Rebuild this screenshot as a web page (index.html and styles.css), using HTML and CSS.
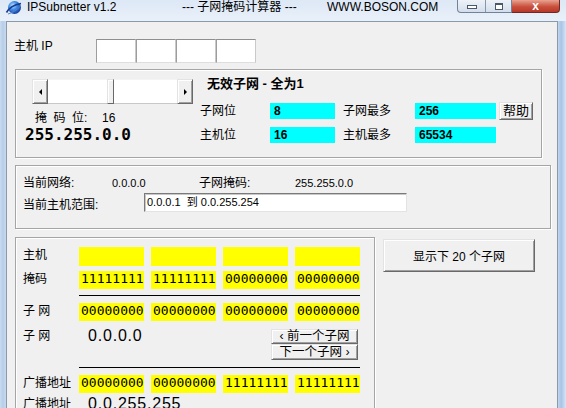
FILE: index.html
```html
<!DOCTYPE html>
<html>
<head>
<meta charset="utf-8">
<link rel="stylesheet" href="styles.css">
</head>
<body>
<div class="window">
  <div class="titlebar">
    <svg class="appicon" viewBox="0 0 17 17">
      <defs>
        <radialGradient id="gl" cx="38%" cy="35%" r="70%">
          <stop offset="0" stop-color="#bfe2ff"/>
          <stop offset="0.45" stop-color="#3f8ce8"/>
          <stop offset="1" stop-color="#10379a"/>
        </radialGradient>
      </defs>
      <circle cx="9.5" cy="7.5" r="6.5" fill="url(#gl)"/>
      <path d="M1.5 12.5 C4 8, 10 4.5, 16 3.5" stroke="#173c8c" stroke-width="1.6" fill="none"/>
      <path d="M3 14 C7 13, 12 10, 15.5 6" stroke="#5a86c8" stroke-width="1" fill="none"/>
    </svg>
    <span class="ttext t1">IPSubnetter v1.2</span>
    <span class="ttext t2">--- 子网掩码计算器 ---</span>
    <span class="ttext t3">WWW.BOSON.COM</span>
    <div class="caption">
      <div class="cgroup">
        <div class="cbtn cmin"><span class="ico-min"></span></div>
        <div class="cbtn cmax"><span class="ico-max"></span></div>
      </div>
      <div class="cbtn cclose">x</div>
    </div>
  </div>
  <div class="frame">
    <div class="frame-l"></div>
    <div class="client">
      <div class="iprow">
        <div class="iplabel">主机 IP</div>
        <div class="ipbox"></div>
        <div class="ipbox"></div>
        <div class="ipbox"></div>
        <div class="ipbox"></div>
      </div>

      <div class="group g1">
        <div class="g1-left">
          <div class="sb">
            <div class="sbtn"><span class="arr-l"></span></div>
            <div class="track t-a"></div>
            <div class="thumb"></div>
            <div class="track t-b"></div>
            <div class="sbtn"><span class="arr-r"></span></div>
          </div>
          <div class="mask"><span class="mlab"><span class="sp">掩码</span>位:</span><span>16</span></div>
          <div class="bigip">255.255.0.0</div>
        </div>
        <div class="g1-right">
          <div class="g1-title">无效子网 - 全为1</div>
          <div class="g1-row r1">
            <span class="lab">子网位</span>
            <span class="cy">8</span>
            <span class="lab2">子网最多</span>
            <span class="cy cy2">256</span>
            <span class="btn help">帮助</span>
          </div>
          <div class="g1-row r2">
            <span class="lab">主机位</span>
            <span class="cy">16</span>
            <span class="lab2">主机最多</span>
            <span class="cy cy2">65534</span>
          </div>
        </div>
      </div>

      <div class="group g2">
        <div class="g2-row ra">
          <span class="l1">当前网络:</span>
          <span class="v1">0.0.0.0</span>
          <span class="l2">子网掩码:</span>
          <span class="v2">255.255.0.0</span>
        </div>
        <div class="g2-row rb">
          <span class="l3">当前主机范围:</span>
          <span class="range">0.0.0.1&nbsp; 到 0.0.255.254</span>
        </div>
      </div>

      <div class="bottom">
        <div class="group g3">
          <div class="brow b-host">
            <span class="blab">主机</span>
            <span class="yc"></span><span class="yc"></span><span class="yc"></span><span class="yc"></span>
          </div>
          <div class="brow b-mask">
            <span class="blab">掩码</span>
            <span class="yc">11111111</span><span class="yc">11111111</span><span class="yc">00000000</span><span class="yc">00000000</span>
          </div>
          <div class="hline l-a"></div>
          <div class="brow b-sub">
            <span class="blab">子 网</span>
            <span class="yc">00000000</span><span class="yc">00000000</span><span class="yc">00000000</span><span class="yc">00000000</span>
          </div>
          <div class="subip">
            <span class="blab">子 网</span>
            <span class="ipval">0.0.0.0</span>
            <div class="navbtns">
              <span class="btn nav">&lsaquo; 前一个子网</span>
              <span class="btn nav nav2">下一个子网 &rsaquo;</span>
            </div>
          </div>
          <div class="hline"></div>
          <div class="brow b-bc">
            <span class="blab">广播地址</span>
            <span class="yc">00000000</span><span class="yc">00000000</span><span class="yc">11111111</span><span class="yc">11111111</span>
          </div>
          <div class="subip bcip">
            <span class="blab">广播地址</span>
            <span class="ipval">0.0.255.255</span>
          </div>
        </div>
        <span class="btn show20">显示下 20 个子网</span>
      </div>
    </div>
    <div class="frame-r"></div>
  </div>
</div>
</body>
</html>
```

FILE: styles.css
```css
* { box-sizing: border-box; margin: 0; padding: 0; }
html, body { width: 566px; height: 408px; overflow: hidden; }
body {
  font-family: "Liberation Sans", "Noto Sans CJK SC", sans-serif;
  font-size: 12px;
  color: #000;
  background: #c4d8ee;
}
.window { width: 566px; height: 408px; display: flex; flex-direction: column; }

/* title bar */
.titlebar {
  height: 21px; flex: none; display: flex; align-items: flex-start;
  background: linear-gradient(#dde8f6, #e9f0f9);
}
.appicon { width: 17px; height: 17px; margin-left: 5px; flex: none; }
.ttext { line-height: 15px; font-size: 12px; white-space: nowrap; color: #000; }
.t1 { margin-left: 5px; width: 155px; }
.t2 { width: 145px; }
.t3 { width: 120px; }
.caption { margin-left: auto; margin-right: 6px; display: flex; height: 13px; }
.cgroup {
  display: flex; border: 1px solid #72829a; border-top: none;
  border-radius: 0 0 0 4px; overflow: hidden;
  background: linear-gradient(#eef2f8, #d3deeb);
}
.cbtn { height: 12px; display: flex; align-items: center; justify-content: center; }
.cmin { width: 28px; border-right: 1px solid #8796ab; }
.cmax { width: 25px; }
.ico-min { width: 10px; height: 4px; border: 1px solid #4a586c; background: #fff; margin-top: 2px; }
.ico-max { width: 8px; height: 7px; border: 1px solid #4a586c; border-top-width: 2px; background: #fff; }
.cclose {
  width: 48px; height: 13px; border: 1px solid #6e2a22; border-top: none; border-left: none;
  border-radius: 0 0 4px 0;
  background: linear-gradient(#e9a292, #c9503c 55%, #b8372a);
  color: #fff; font-weight: bold; font-size: 12px; line-height: 10px;
}

/* frame */
.frame { flex: 1; display: flex; min-height: 0; }
.frame-l { width: 6px; flex: none; background: linear-gradient(90deg, #c9dbef, #b7cee9 50%, #c8d9ee); }
.frame-r { width: 8px; flex: none; background: linear-gradient(90deg, #c2d6ed, #a9c4e6 40%, #d6e4f4); }
.client {
  flex: 1; background: #f0f0f0; border: 1px solid #8a99ab; border-bottom: none;
  padding-left: 8px; overflow: hidden;
}

/* ip row */
.iprow { display: flex; margin-top: 17px; height: 24px; }
.iplabel { width: 82px; margin-left: -1px; line-height: 14px; }
.ipbox {
  width: 40px; height: 24px; background: #fff;
  border: 1px solid; border-color: #8e8f8f #c9c9c9 #dedede #9d9d9d;
}

/* group boxes */
.group {
  border: 1px solid #a5a5a5;
  box-shadow: inset 1px 1px 0 #fff, 1px 1px 0 #fff;
}
.g1 { margin-top: 6px; width: 527px; height: 89px; display: flex; }
.g1-left { width: 184px; flex: none; }
.sb { margin: 9px 0 0 16px; width: 161px; height: 25px; display: flex; background: #fff; }
.sbtn {
  width: 16px; height: 25px; background: #f0f0f0; display: flex; align-items: center; justify-content: center;
  border: 1px solid; border-color: #e3e3e3 #696969 #696969 #e3e3e3;
  box-shadow: inset 1px 1px 0 #fff, inset -1px -1px 0 #a0a0a0;
}
.arr-l { width: 0; height: 0; border-top: 3px solid transparent; border-bottom: 3px solid transparent; border-right: 3px solid #000; }
.arr-r { width: 0; height: 0; border-top: 3px solid transparent; border-bottom: 3px solid transparent; border-left: 3px solid #000; }
.track { background: #fff; border-top: 1px solid #f4f4f4; border-bottom: 1px solid #c8c8c8; }
.t-a { width: 59px; }
.t-b { flex: 1; }
.thumb {
  width: 7px; background: #f0f0f0;
  border: 1px solid; border-color: #e3e3e3 #696969 #696969 #e3e3e3;
  box-shadow: inset 1px 1px 0 #fff;
}
.mask { margin: 7px 0 0 19px; line-height: 14px; display: flex; }
.mlab { width: 67px; }
.sp { letter-spacing: 6.5px; }
.bigip { margin: 1px 0 0 9px; font: bold 16px/18px "DejaVu Sans Mono", monospace; }

.g1-right { flex: 1; }
.g1-title { margin: 6px 0 0 7px; font-weight: bold; font-size: 13px; line-height: 16px; }
.g1-row { display: flex; height: 16px; line-height: 16px; }
.r1 { margin-top: 11px; }
.r2 { margin-top: 8px; }
.lab { width: 70px; }
.cy { width: 65px; background: #00ffff; font-weight: bold; padding-left: 4px; }
.lab2 { width: 72px; margin-left: 8px; }
.cy2 { width: 81px; }

.btn {
  background: #f0f0f0; display: flex; align-items: center; justify-content: center; white-space: nowrap;
  border: 1px solid; border-color: #e3e3e3 #696969 #696969 #e3e3e3;
  box-shadow: inset 1px 1px 0 #fff, inset -1px -1px 0 #a0a0a0;
}
.help { margin-left: 3px; width: 34px; height: 18px; margin-top: -1px; font-size: 13px; }

/* group 2 */
.g2 { margin-top: 7px; width: 536px; height: 64px; padding-left: 7px; }
.g2-row { display: flex; }
.ra { margin-top: 10px; line-height: 14px; }
.l1 { width: 89px; }
.v1 { width: 87px; font-size: 11px; }
.l2 { width: 96px; }
.v2 { font-size: 11px; }
.rb { margin-top: 3px; align-items: center; }
.l3 { width: 121px; padding-top: 1px; }
.range {
  width: 263px; height: 19px; background: #fff; padding-left: 2px; font-size: 11px; line-height: 16px;
  border: 1px solid; border-color: #7a7a7a #e3e3e3 #e3e3e3 #7a7a7a;
  box-shadow: inset 1px 1px 0 #c8c8c8;
}

/* bottom */
.bottom { display: flex; margin-top: 8px; align-items: flex-start; }
.g3 { width: 360px; height: 200px; flex: none; padding-left: 7px; }
.brow { display: grid; grid-template-columns: 49px repeat(4, 65px); column-gap: 7px; height: 18px; }
.b-host { margin-top: 9px; height: 19px; }
.b-mask { margin-top: 5px; }
.b-sub { margin-top: 7px; }
.b-bc { margin-top: 7px; }
.blab { line-height: 14px; margin-top: 1px; }
.yc { background: #ffff00; font: 13px/16px "DejaVu Sans Mono", monospace; padding-left: 2px; }
.hline { height: 1px; background: #000; margin-left: 56px; width: 281px; }
.l-a { margin-top: 6px; }
.subip { display: flex; height: 46px; }
.subip .blab { width: 65px; margin-top: 8px; }
.ipval { font-size: 16px; line-height: 18px; letter-spacing: 0.8px; margin-top: 6px; }
.navbtns { margin-left: auto; margin-right: 16px; margin-top: 8px; display: flex; flex-direction: column; }
.nav { width: 87px; height: 15px; font-size: 12.5px; line-height: 13px; }
.nav2 { height: 16px; }
.bcip { height: 30px; }
.bcip .blab { margin-top: 4px; }
.bcip .ipval { margin-top: 2px; }

.show20 { margin: 2px 0 0 8px; width: 152px; height: 33px; font-size: 12px; }
```
